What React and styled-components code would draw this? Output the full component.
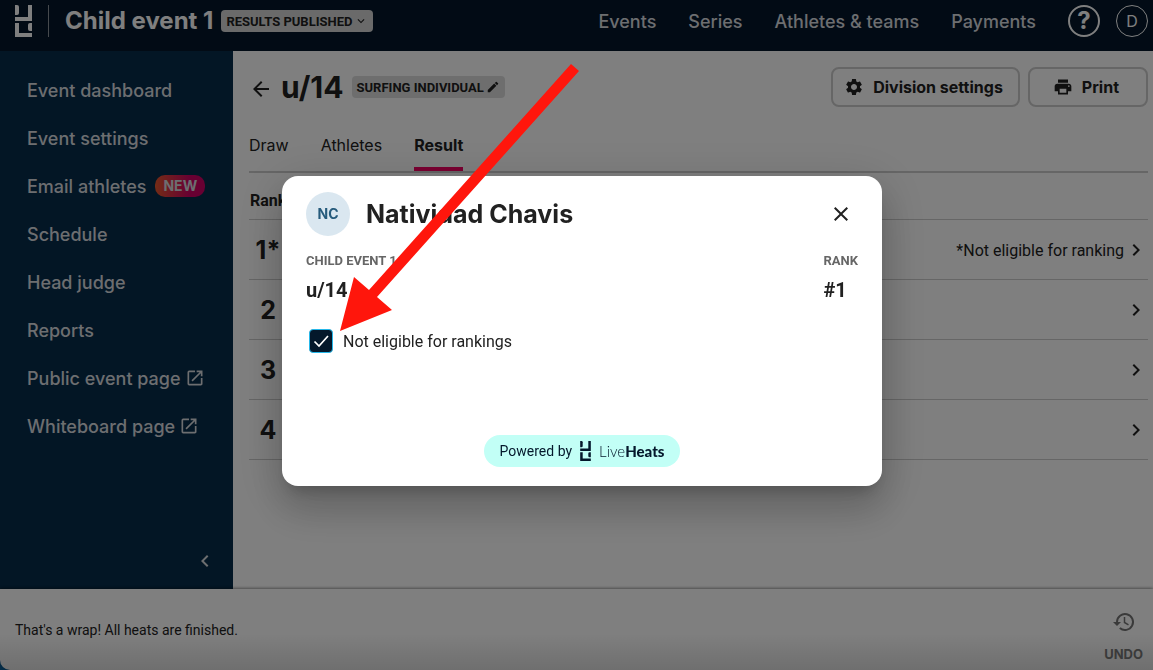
import React, { useState } from 'react'
import styled, { createGlobalStyle } from 'styled-components'
import {
  MdArrowBack,
  MdChevronLeft,
  MdChevronRight,
  MdClose,
  MdEdit,
  MdExpandMore,
  MdOpenInNew,
  MdPrint,
  MdSettings,
} from 'react-icons/md'

const GlobalStyle = createGlobalStyle`
  * {
    box-sizing: border-box;
  }

  body {
    margin: 0;
    font-family: Roboto, 'Liberation Sans', sans-serif;
    color: #212121;
    background: #fff;
  }

  button {
    font-family: inherit;
    color: inherit;
    cursor: pointer;
  }
`

const Page = styled.div`
  display: flex;
  flex-direction: column;
  height: 100vh;
  overflow: hidden;
  background: #0a5a90;
`

const Header = styled.header`
  display: flex;
  align-items: center;
  height: 51px;
  padding: 0 5px 9px 15px;
  background: #04172a;
  color: #fff;
  font-family: Inter, sans-serif;
`

const Title = styled.h1`
  margin: 0 8px 0 16px;
  padding-left: 16px;
  border-left: 1px solid #8c949c;
  font-size: 24px;
  font-weight: 700;
  line-height: 32px;
`

const Chip = styled.button`
  display: flex;
  align-items: center;
  gap: 2px;
  height: 22px;
  padding: 0 5px;
  border: 0;
  border-radius: 4px;
  background: ${props => props.$background};
  color: #212121;
  font-family: Roboto, sans-serif;
  font-size: 13px;
  font-weight: 700;
`

const TopNav = styled.nav`
  display: flex;
  gap: 32px;
  margin-left: auto;
  margin-right: 32px;

  a {
    color: #dadde0;
    font-size: 18px;
    font-weight: 500;
    text-decoration: none;
  }
`

const RoundButton = styled.button`
  width: 32px;
  height: 32px;
  padding: 0;
  border: ${props => (props.$strong ? 2 : 1)}px solid #fff;
  border-radius: 50%;
  background: none;
  color: #fff;
  font-size: ${props => (props.$strong ? 24 : 16)}px;
  font-weight: ${props => (props.$strong ? 700 : 400)};
  line-height: 24px;

  & + & {
    margin-left: 16px;
  }
`

const Body = styled.div`
  display: flex;
  flex: 1;
  min-height: 0;
`

const Sidebar = styled.nav`
  display: flex;
  flex-direction: column;
  flex: none;
  width: 233px;
  padding: 15px 16px 16px 27px;
  background: #062c4a;
  color: #dadde0;
  font-family: Inter, sans-serif;
`

const SideLink = styled.a`
  display: flex;
  align-items: center;
  gap: 4px;
  height: 48px;
  color: inherit;
  font-size: 18px;
  font-weight: 500;
  text-decoration: none;
`

const NewBadge = styled.span`
  margin-left: 5px;
  padding: 0 8px;
  border-radius: 10px;
  background: linear-gradient(90deg, #e8582c, #d00064 70%);
  font-size: 14px;
  font-weight: 700;
  line-height: 22px;
`

const Collapse = styled.button`
  display: flex;
  align-self: flex-end;
  margin-top: auto;
  padding: 0;
  border: 0;
  background: none;
  color: #dadde0;
`

const Main = styled.main`
  flex: 1;
  padding: 16px 5px 0 16px;
  background: #fff;
`

const Heading = styled.div`
  display: flex;
  align-items: center;
  gap: 8px;
  height: 40px;
`

const BackLink = styled.a`
  display: flex;
  padding-top: 4px;
  color: inherit;
`

const DivisionName = styled.h2`
  margin: 0;
  font-family: Inter, sans-serif;
  font-size: 30px;
  font-weight: 700;
`

const Actions = styled.div`
  display: flex;
  gap: 8px;
  margin-left: auto;
`

const ActionButton = styled.button`
  display: flex;
  align-items: center;
  gap: 9px;
  height: 40px;
  padding: 0 ${props => (props.$wide ? 27 : 15)}px 0 ${props => (props.$wide ? 23 : 11)}px;
  border: 2px solid #ccc;
  border-radius: 8px;
  background: none;
  font-family: Inter, sans-serif;
  font-size: 16px;
  font-weight: 700;
`

const Tabs = styled.div`
  display: flex;
  gap: 32px;
  margin-top: 14px;
  border-bottom: 2px solid #ccc;
`

const Tab = styled.button`
  height: 50px;
  padding: 2px 0 0;
  border: 0;
  border-bottom: 4px solid ${props => (props.$active ? '#f50062' : 'transparent')};
  background: none;
  font-family: Inter, sans-serif;
  font-size: 16px;
  font-weight: ${props => (props.$active ? 700 : 400)};
`

const ResultTable = styled.table`
  width: 100%;
  border-collapse: collapse;

  th,
  td {
    padding: 2px 0 0;
    border-bottom: 1px solid #ccc;
  }

  th {
    height: 46px;
    padding: 10px 0 0 1px;
    text-align: left;
    font-size: 16px;
  }

  td {
    height: 60px;
  }
`

const Place = styled.td`
  width: 38px;
  font-family: Inter, sans-serif;
  font-size: 25px;
  font-weight: 700;
  text-align: center;
`

const Note = styled.div`
  display: flex;
  align-items: center;
  justify-content: flex-end;
  font-size: 16px;
`

const Footer = styled.footer`
  display: flex;
  align-items: center;
  justify-content: space-between;
  height: 81px;
  padding: 0 10px 0 15px;
  border-bottom-left-radius: 10px;
  background: linear-gradient(#fff 55%, #dedede);
  box-shadow: 0 -1px 3px rgba(0, 0, 0, 0.4);
  font-size: 14px;
  z-index: 1;
`

const Undo = styled.button`
  display: flex;
  flex-direction: column;
  align-items: center;
  gap: 14px;
  margin-top: 14px;
  padding: 0;
  border: 0;
  background: none;
  color: #757575;
  font-family: Inter, sans-serif;
  font-size: 13px;
  font-weight: 700;
`

const Backdrop = styled.div`
  position: fixed;
  inset: 0;
  z-index: 2;
  display: flex;
  align-items: flex-start;
  justify-content: center;
  padding: 176px 12px 0 23px;
  background: rgba(0, 0, 0, 0.5);
`

const Dialog = styled.section`
  display: flex;
  flex-direction: column;
  width: 100%;
  max-width: 600px;
  min-height: 310px;
  padding: 16px 24px 19px;
  border-radius: 16px;
  background: #fff;
  box-shadow: 0 11px 15px -7px rgba(0, 0, 0, 0.2),
    0 24px 38px 3px rgba(0, 0, 0, 0.14), 0 9px 46px 8px rgba(0, 0, 0, 0.12);
`

const DialogHead = styled.div`
  display: flex;
  align-items: center;
  gap: 16px;

  h2 {
    margin: 0;
    font-family: Inter, sans-serif;
    font-size: 25px;
    font-weight: 700;
  }
`

const Avatar = styled.span`
  width: 44px;
  border-radius: 50%;
  background: #dae7f0;
  color: #265b7c;
  font-family: Inter, sans-serif;
  font-size: 14px;
  font-weight: 700;
  line-height: 44px;
  text-align: center;
`

const CloseButton = styled.button`
  display: flex;
  margin-left: auto;
  padding: 5px;
  border: 0;
  background: none;
`

const Facts = styled.dl`
  display: flex;
  justify-content: space-between;
  margin: 16px 0 0;

  dt {
    color: #666;
    font-size: 13px;
    font-weight: 700;
    line-height: 18px;
  }

  dd {
    margin: 8px 0 0;
    font-size: 20px;
    font-weight: 700;
    line-height: 24px;
  }
`

const CheckLabel = styled.label`
  display: flex;
  align-items: center;
  gap: 10px;
  margin: 27px 0 0 3px;
  font-size: 16px;
`

const CheckBox = styled.input`
  appearance: none;
  width: 24px;
  height: 24px;
  margin: 0;
  border: 1px solid #26b8ea;
  border-radius: 4px;
  background: #fff;

  &:checked {
    background: #04182b
      url("data:image/svg+xml,%3Csvg xmlns='http://www.w3.org/2000/svg' viewBox='0 0 22 22'%3E%3Cpath d='M4.5 11.5l4.5 4.5 9-10' fill='none' stroke='white' stroke-width='1.7'/%3E%3C/svg%3E");
  }
`

const PoweredBy = styled.a`
  display: flex;
  align-items: center;
  align-self: center;
  gap: 8px;
  height: 32px;
  margin-top: auto;
  padding: 0 16px;
  border-radius: 16px;
  background: #c2fff6;
  color: #04182b;
  font-size: 14px;
  text-decoration: none;
`

const Brand = styled.span`
  font-family: Lato, sans-serif;
  font-size: 15px;
  font-weight: 300;

  b {
    font-weight: 900;
  }
`

const Pointer = styled.svg`
  position: fixed;
  top: 64px;
  left: 340px;
  z-index: 3;
  pointer-events: none;
`

function Logo({ width, height }) {
  return (
    <svg width={width} height={height} viewBox="0 0 17 32" fill="currentColor" aria-hidden="true">
      <path d="M0 0h2a2 2 0 0 1 2 2v6a2 2 0 0 1-2 2H0z" />
      <path d="M13 0h4v16H0v-4h13z" />
      <path d="M0 18h4v10h13v4H0z" />
      <path d="M17 18h-2a2 2 0 0 0-2 2v4a2 2 0 0 0 2 2h2z" />
    </svg>
  )
}

function HistoryIcon() {
  return (
    <svg width="22" height="20" viewBox="0 0 22 20" fill="none" stroke="currentColor" aria-hidden="true">
      <path d="M4 10a8 8 0 1 1 2.8 6.1" strokeWidth="2" />
      <path d="M0 10h8l-4 4z" fill="currentColor" stroke="none" />
      <path d="M11.5 5v5.5l4 2.3" strokeWidth="1.5" />
    </svg>
  )
}

const topLinks = ['Events', 'Series', 'Athletes & teams', 'Payments']

const sideLinks = [
  { label: 'Event dashboard' },
  { label: 'Event settings' },
  { label: 'Email athletes', isNew: true },
  { label: 'Schedule' },
  { label: 'Head judge' },
  { label: 'Reports' },
  { label: 'Public event page', external: true },
  { label: 'Whiteboard page', external: true },
]

const tabs = ['Draw', 'Athletes', 'Result']

export default function App() {
  const [tab, setTab] = useState('Result')
  const [open, setOpen] = useState(true)
  const [notEligible, setNotEligible] = useState(true)

  const places = [notEligible ? '1*' : '1', '2', '3', '4']

  return (
    <React.Fragment>
      <GlobalStyle />
      <Page>
        <Header>
          <Logo width={17} height={32} />
          <Title>Child event 1</Title>
          <Chip $background="#d4d4d4">
            RESULTS PUBLISHED <MdExpandMore size={14} />
          </Chip>
          <TopNav>
            {topLinks.map(label => (
              <a key={label} href="#">
                {label}
              </a>
            ))}
          </TopNav>
          <RoundButton $strong aria-label="Help">
            ?
          </RoundButton>
          <RoundButton aria-label="Account">D</RoundButton>
        </Header>

        <Body>
          <Sidebar>
            {sideLinks.map(({ label, isNew, external }) => (
              <SideLink key={label} href="#">
                {label}
                {isNew && <NewBadge>NEW</NewBadge>}
                {external && <MdOpenInNew size={20} />}
              </SideLink>
            ))}
            <Collapse aria-label="Collapse menu">
              <MdChevronLeft size={24} />
            </Collapse>
          </Sidebar>

          <Main>
            <Heading>
              <BackLink href="#" aria-label="Back">
                <MdArrowBack size={24} />
              </BackLink>
              <DivisionName>u/14</DivisionName>
              <Chip $background="#ddd">
                SURFING INDIVIDUAL <MdEdit size={14} />
              </Chip>
              <Actions>
                <ActionButton>
                  <MdSettings size={20} /> Division settings
                </ActionButton>
                <ActionButton $wide>
                  <MdPrint size={20} /> Print
                </ActionButton>
              </Actions>
            </Heading>

            <Tabs role="tablist">
              {tabs.map(name => (
                <Tab
                  key={name}
                  role="tab"
                  aria-selected={tab === name}
                  $active={tab === name}
                  onClick={() => setTab(name)}
                >
                  {name}
                </Tab>
              ))}
            </Tabs>

            <ResultTable>
              <thead>
                <tr>
                  <th colSpan={2}>Rank</th>
                </tr>
              </thead>
              <tbody>
                {places.map((place, i) => (
                  <tr key={i}>
                    <Place>{place}</Place>
                    <td>
                      <Note>
                        {place.endsWith('*') && '*Not eligible for ranking'}
                        <MdChevronRight size={24} />
                      </Note>
                    </td>
                  </tr>
                ))}
              </tbody>
            </ResultTable>
          </Main>
        </Body>

        <Footer>
          <span>That's a wrap! All heats are finished.</span>
          <Undo>
            <HistoryIcon />
            UNDO
          </Undo>
        </Footer>
      </Page>

      {open && (
        <Backdrop>
          <Dialog role="dialog" aria-labelledby="athlete-name">
            <DialogHead>
              <Avatar>NC</Avatar>
              <h2 id="athlete-name">Natividad Chavis</h2>
              <CloseButton aria-label="Close" onClick={() => setOpen(false)}>
                <MdClose size={24} />
              </CloseButton>
            </DialogHead>
            <Facts>
              <div>
                <dt>CHILD EVENT 1</dt>
                <dd>u/14</dd>
              </div>
              <div>
                <dt>RANK</dt>
                <dd>#1</dd>
              </div>
            </Facts>
            <CheckLabel htmlFor="not-eligible">
              <CheckBox
                id="not-eligible"
                type="checkbox"
                checked={notEligible}
                onChange={e => setNotEligible(e.target.checked)}
              />
              Not eligible for rankings
            </CheckLabel>
            <PoweredBy href="#">
              Powered by
              <Logo width={11} height={20} />
              <Brand>
                Live<b>Heats</b>
              </Brand>
            </PoweredBy>
          </Dialog>
        </Backdrop>
      )}

      <Pointer width="240" height="268" viewBox="0 0 240 268" fill="#ff160c" aria-hidden="true">
        <path d="M0 267L14 213L29 226L231 0L239 7L37 233L52 246Z" />
      </Pointer>
    </React.Fragment>
  )
}
